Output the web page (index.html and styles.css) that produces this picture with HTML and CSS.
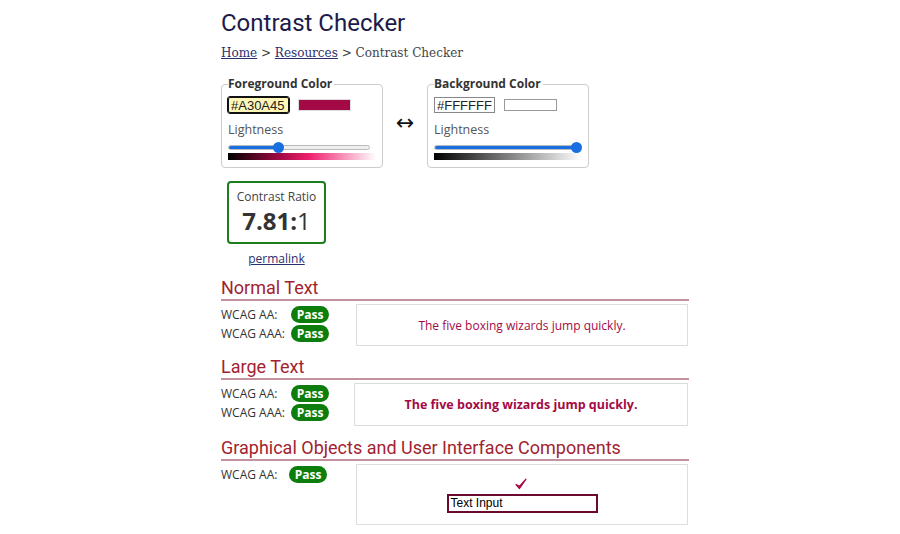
FILE: index.html
```html
<!DOCTYPE html>
<html>
<head>
<meta charset="utf-8">
<link rel="stylesheet" href="styles.css">
</head>
<body>
<div class="page">
  <h1 class="title">Contrast Checker</h1>
  <div class="crumbs"><a href="#">Home</a> &gt; <a href="#">Resources</a> &gt; Contrast Checker</div>

  <div class="pickers">
    <fieldset class="picker">
      <legend>Foreground Color</legend>
      <div class="color-row">
        <input class="hex hex-focus" type="text" value="#A30A45">
        <span class="swatch swatch-fg"></span>
      </div>
      <div class="light-label">Lightness</div>
      <div class="slider">
        <div class="track"><div class="fill" style="width:35%"></div></div>
        <div class="thumb" style="left:35%"></div>
      </div>
      <div class="grad grad-fg"></div>
    </fieldset>
    <div class="swap">&#8596;</div>
    <fieldset class="picker">
      <legend>Background Color</legend>
      <div class="color-row">
        <input class="hex" type="text" value="#FFFFFF">
        <span class="swatch swatch-bg"></span>
      </div>
      <div class="light-label">Lightness</div>
      <div class="slider">
        <div class="track"><div class="fill" style="width:100%"></div></div>
        <div class="thumb" style="left:100%"></div>
      </div>
      <div class="grad grad-bg"></div>
    </fieldset>
  </div>

  <div class="ratio-wrap">
    <div class="ratio">
      <div class="ratio-label">Contrast Ratio</div>
      <div class="ratio-value"><b>7.81:</b>1</div>
    </div>
    <a class="permalink" href="#">permalink</a>
  </div>

  <section class="sec">
    <h2 class="sec-title">Normal Text</h2>
    <div class="sec-row">
      <div class="results">
        <div class="res"><span class="lbl">WCAG AA:</span><span class="pass">Pass</span></div>
        <div class="res"><span class="lbl">WCAG AAA:</span><span class="pass">Pass</span></div>
      </div>
      <div class="sample sample-normal">The five boxing wizards jump quickly.</div>
    </div>
  </section>

  <section class="sec">
    <h2 class="sec-title">Large Text</h2>
    <div class="sec-row">
      <div class="results">
        <div class="res"><span class="lbl">WCAG AA:</span><span class="pass">Pass</span></div>
        <div class="res"><span class="lbl">WCAG AAA:</span><span class="pass">Pass</span></div>
      </div>
      <div class="sample sample-large">The five boxing wizards jump quickly.</div>
    </div>
  </section>

  <section class="sec sec-ui">
    <h2 class="sec-title">Graphical Objects and User Interface Components</h2>
    <div class="sec-row">
      <div class="results">
        <div class="res"><span class="lbl lbl-ui">WCAG AA:</span><span class="pass">Pass</span></div>
      </div>
      <div class="sample sample-ui">
        <svg class="check" width="12" height="12" viewBox="0 0 12 12"><path d="M1 6.5 L4.5 10.5 L11 1.2 L4.6 8.2 Z" fill="#a30a45" stroke="#a30a45" stroke-width="1.2" stroke-linejoin="round"/></svg>
        <div class="text-input">Text Input</div>
      </div>
    </div>
  </section>
</div>
</body>
</html>
```

FILE: styles.css
```css
* { box-sizing: border-box; }
body {
  margin: 0;
  background: #fff;
  font-family: "Open Sans", "Liberation Sans", sans-serif;
  color: #333;
}
.page {
  width: 468px;
  margin-left: 221px;
  padding-top: 9px;
}
.title {
  margin: 0;
  font-family: Roboto, sans-serif;
  font-weight: 400;
  font-size: 24px;
  line-height: 28px;
  color: #1b1b4b;
}
.crumbs {
  margin-top: 7px;
  font-family: "DejaVu Serif", serif;
  font-size: 12px;
  line-height: 18px;
  color: #444;
}
.crumbs a { color: #2b2f6e; }

.pickers {
  display: flex;
  align-items: center;
  margin-top: 14px;
}
.picker {
  width: 162px;
  margin: 0;
  padding: 5px 6px 7px;
  border: 1px solid #ccc;
  border-radius: 4px;
}
.picker legend {
  padding: 0 2px 0 0;
  font-weight: 700;
  font-size: 12px;
  line-height: 16px;
  color: #333;
}
.color-row {
  display: flex;
  align-items: center;
  gap: 9px;
}
.hex {
  width: 61px;
  height: 16px;
  padding: 0 2px;
  margin: 0;
  font-family: "Liberation Sans", Arial, sans-serif;
  font-size: 13px;
  color: #222;
  border: 1px solid #888;
  border-radius: 0;
  background: #fff;
}
.hex-focus {
  background: #fff7b8;
  border: 1px solid #111;
  border-radius: 2px;
  outline: 1px solid #111;
}
.swatch {
  display: block;
  width: 53px;
  height: 12px;
  border: 1px solid #ddd;
}
.swatch-fg { background: #a30a45; }
.swatch-bg { background: #fff; border-color: #999; }
.light-label {
  margin-top: 8px;
  font-size: 12.5px;
  line-height: 18px;
  color: #555;
}
.slider {
  position: relative;
  height: 10px;
  margin-top: 3px;
  margin-right: 6px;
}
.track {
  position: absolute;
  left: 0;
  right: 0;
  top: 3px;
  height: 5px;
  background: #efefef;
  border: 1px solid #bbb;
  border-radius: 3px;
  overflow: hidden;
}
.fill {
  height: 100%;
  background: #1a6fe0;
}
.thumb {
  position: absolute;
  top: 0;
  width: 11px;
  height: 11px;
  margin-left: -5px;
  border-radius: 50%;
  background: #1a6fe0;
}
.grad {
  height: 7px;
  margin-top: 1px;
}
.grad-fg { background: linear-gradient(to right, #000 0%, #a30a45 35%, #f0206f 55%, #fff 100%); }
.grad-bg { background: linear-gradient(to right, #000 0%, #fff 100%); }
.swap {
  width: 44px;
  text-align: center;
  font-size: 22px;
  color: #111;
  font-family: "DejaVu Sans", sans-serif;
}

.ratio-wrap {
  width: 99px;
  margin-left: 6px;
  margin-top: 13px;
  display: flex;
  flex-direction: column;
  align-items: center;
}
.ratio {
  width: 99px;
  height: 63px;
  border: 2px solid #1c7d1c;
  border-radius: 4px;
  text-align: center;
  padding-top: 5px;
}
.ratio-label {
  font-size: 12px;
  line-height: 18px;
  color: #444;
}
.ratio-value {
  font-size: 24px;
  line-height: 30px;
  color: #333;
}
.ratio-value b { font-weight: 700; }
.permalink {
  margin-top: 7px;
  font-size: 12px;
  line-height: 16px;
  color: #2b2f6e;
}

.sec { margin-top: 10px; }
.sec-ui { margin-top: 11px; }
.sec-title {
  margin: 0;
  font-family: Roboto, sans-serif;
  font-weight: 400;
  font-size: 18px;
  line-height: 22px;
  color: #a2232f;
  border-bottom: 2px solid #c2939f;
}
.sec-row {
  display: flex;
  margin-top: 3px;
}
.results {
  width: 135px;
  padding-top: 1px;
}
.res {
  display: flex;
  align-items: center;
  height: 19px;
}
.lbl {
  width: 70px;
  font-size: 12px;
  color: #333;
}
.lbl-ui { width: 68px; }
.pass {
  display: inline-block;
  width: 38px;
  height: 17px;
  line-height: 17px;
  text-align: center;
  border-radius: 9px;
  background: #0d7e0d;
  color: #fff;
  font-weight: 700;
  font-size: 12px;
}
.sample {
  flex: 1;
  margin-right: 1px;
  border: 1px solid #ddd;
  display: flex;
  align-items: center;
  justify-content: center;
  color: #a30a45;
}
.sample-normal {
  height: 42px;
  font-size: 12px;
}
.sample-large {
  height: 43px;
  font-size: 12.5px;
  font-weight: 700;
  margin-left: -2px;
}
.sample-ui {
  height: 61px;
  flex-direction: column;
  padding-top: 2px;
}
.check { display: block; margin-bottom: 4px; margin-left: -2px; }
.text-input {
  width: 151px;
  height: 19px;
  border: 2px solid #6b0a30;
  padding: 0 2px;
  font-family: "Liberation Sans", Arial, sans-serif;
  font-size: 12px;
  line-height: 15px;
  color: #000;
}
```
